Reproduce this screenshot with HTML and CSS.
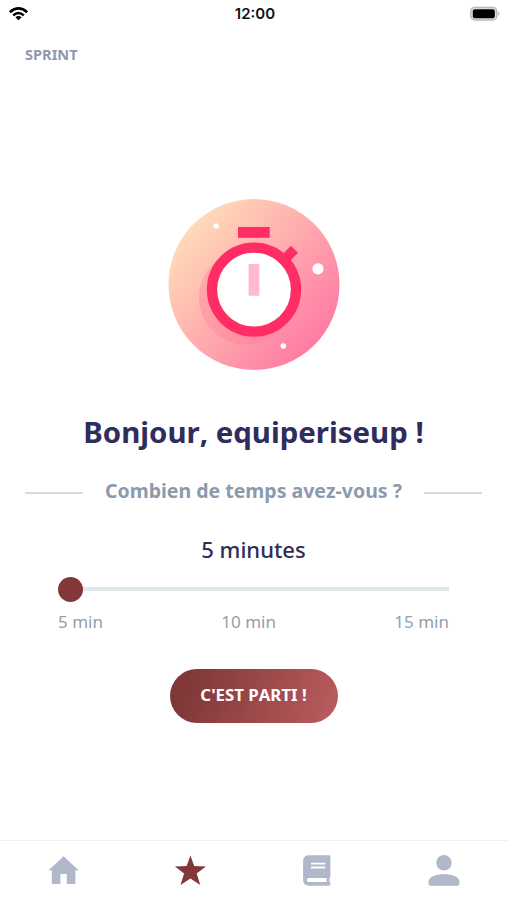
FILE: index.html
```html
<!DOCTYPE html>
<html lang="fr">
<head>
<meta charset="utf-8">
<title>Sprint</title>
<link rel="stylesheet" href="styles.css">
</head>
<body>
<div class="app">
  <div class="status">
    <svg class="wifi" width="20" height="16" viewBox="0 0 20 16" fill="none" stroke="#000" stroke-width="2.6"><path d="M.8 6.2Q9.5 -1.4 18.2 6.2M4.2 9.4Q9.5 4.6 14.8 9.4"/><path fill="#000" stroke="none" d="M6.4 11.2Q9.5 8.6 12.6 11.2L9.5 14.2Z"/></svg>
    <span class="clock">12:00</span>
    <svg class="battery" width="32" height="16" viewBox="0 0 32 16"><rect x="1.8" y="1.4" width="26" height="12.6" rx="4" fill="#ddd" stroke="#b9b9b9" stroke-width="1.4"/><rect x="3.8" y="3.2" width="22" height="9" rx="2" fill="#000"/><path d="M29.2 5.3q2.6 2.4 0 4.8z" fill="#b9b9b9"/></svg>
  </div>
  <header class="title">SPRINT</header>
  <main class="main">
    <svg class="watch" width="172" height="172" viewBox="168 199 172 172">
      <defs><linearGradient id="sky" x1="0.1" y1="0.15" x2="0.9" y2="0.85"><stop offset="0" stop-color="#ffddb9"/><stop offset="1" stop-color="#ff78a3"/></linearGradient></defs>
      <circle cx="254" cy="284.5" r="85.5" fill="url(#sky)"/>
      <circle cx="246" cy="297.5" r="47" fill="#ff7f95" fill-opacity=".4"/>
      <path d="M290.8 245.8L298 252.8L288 263L282 255Z" fill="#ff2d64"/>
      <circle cx="254" cy="289.6" r="42" fill="#fff" stroke="#ff2d64" stroke-width="10.3"/>
      <path d="M238 227h31.7v10.8H238z" fill="#ff2d64"/>
      <path d="M248.6 264h10.7v31.7h-10.7z" fill="#ffb9d0"/>
      <g fill="#fff"><circle cx="216.2" cy="226" r="2.7"/><circle cx="318" cy="268.8" r="5.6"/><circle cx="283.3" cy="346" r="2.8"/></g>
    </svg>
    <h1 class="hello">Bonjour, equiperiseup !</h1>
    <div class="ask"><i class="rule"></i><h2 class="question">Combien de temps avez-vous ?</h2><i class="rule"></i></div>
    <p class="value">5 minutes</p>
    <div class="slider"><span class="thumb"></span><span class="track"></span></div>
    <div class="scale"><span>5 min</span><span>10 min</span><span>15 min</span></div>
    <button class="go">C'EST PARTI !</button>
  </main>
  <nav class="nav">
    <a class="tab"><svg width="32" height="32" viewBox="0 0 32 32"><path d="M16.6 1.3L31.6 15.2H28.4V29H19.8V19H13.4V29H4.8V15.2H1.6Z"/></svg></a>
    <a class="tab active"><svg width="32" height="32" viewBox="0 0 32 32"><path d="M16.4 .4L20.2 11L31.9 11.4L22.7 18.6L26.3 30L16.4 23.4L6.5 30L10.1 18.6L.9 11.4L12.6 11Z"/></svg></a>
    <a class="tab"><svg width="32" height="32" viewBox="0 0 32 32"><path d="M7.8.2H28Q29.4.2 29.4 1.6V21.8Q29.4 22.8 28.6 23.4Q28 25.2 28.6 27.1Q29.4 27.6 29.4 28.6V29.4Q29.4 30.8 28 30.8H7.8Q2.1 30.8 2.1 25.1V5.9Q2.1.2 7.8.2Z"/><path class="page" d="M10 7.7H24.2V9.5H10ZM10 11.6H24.2V13.4H10ZM7.8 23.1Q5.9 23.1 5.9 25Q5.9 27 7.8 27H25.7Q25.3 25 25.7 23.1Z"/></svg></a>
    <a class="tab"><svg width="32" height="32" viewBox="0 0 32 32"><circle cx="16" cy="7.8" r="7.7"/><path d="M.5 28.6V26.6C.5 21.6 8 19.2 16 19.2S31.5 21.6 31.5 26.6V28.6Q31.5 30.8 29.3 30.8H2.7Q.5 30.8 .5 28.6Z"/></svg></a>
  </nav>
</div>
</body>
</html>
```

FILE: styles.css
```css
* { box-sizing: border-box; }
body { margin: 0; background: #fff; font-family: "Noto Sans", sans-serif; font-kerning: none; }
.app { width: 507px; height: 900px; display: flex; flex-direction: column; overflow: hidden; }
.status { height: 27px; padding: 0 6px 0 9px; display: grid; grid-template-columns: 1fr auto 1fr; align-items: center; }
.clock { font: 600 15px/20px Inter, sans-serif; color: #111; letter-spacing: 0; }
.battery { justify-self: end; }
.title { height: 54px; padding-left: 25px; font-weight: 700; font-size: 14.6px; line-height: 54px; color: #8e99ae; }
.main { flex: 1; padding-top: 118px; display: flex; flex-direction: column; align-items: center; }
.watch { flex: none; }
.hello { margin: 40px 0 0; font-size: 29.4px; font-weight: 700; line-height: 42px; color: #302c5b; white-space: nowrap; }
.ask { width: 458px; margin-top: 23px; display: flex; align-items: center; justify-content: space-between; height: 30px; }
.rule { width: 58px; height: 2px; background: #d7dade; margin-top: 3px; }
.question { margin: 0; font-size: 19.5px; font-weight: 700; line-height: 30px; color: #8b9bad; white-space: nowrap; }
.value { margin: 28px 0 0; font-size: 22px; font-weight: 500; line-height: 30px; color: #302c5b; }
.slider { width: 391px; height: 26px; margin-top: 12px; display: flex; align-items: center; }
.thumb { width: 25px; height: 25px; border-radius: 50%; background: #823838; }
.track { flex: 1; height: 4px; background: #e0e8e9; }
.scale { width: 391px; margin-top: 8px; display: flex; justify-content: space-between; font-size: 17px; line-height: 24px; color: #949eac; }
.go { width: 168px; height: 54px; margin-top: 35px; padding: 0 0 3px; border: 0; border-radius: 27px; background: linear-gradient(110deg, #7f3737 10%, #b85b5d 95%); color: #fff; font: 700 16.8px/24px "Noto Sans", sans-serif; font-kerning: none; white-space: nowrap; }
.nav { height: 60px; border-top: 1px solid #eeeff1; display: grid; grid-template-columns: repeat(4, 1fr); }
.tab { display: flex; justify-content: center; padding-top: 14px; fill: #b0b8ca; }
.active { fill: #823838; }
.page { fill: #fff; }
```
